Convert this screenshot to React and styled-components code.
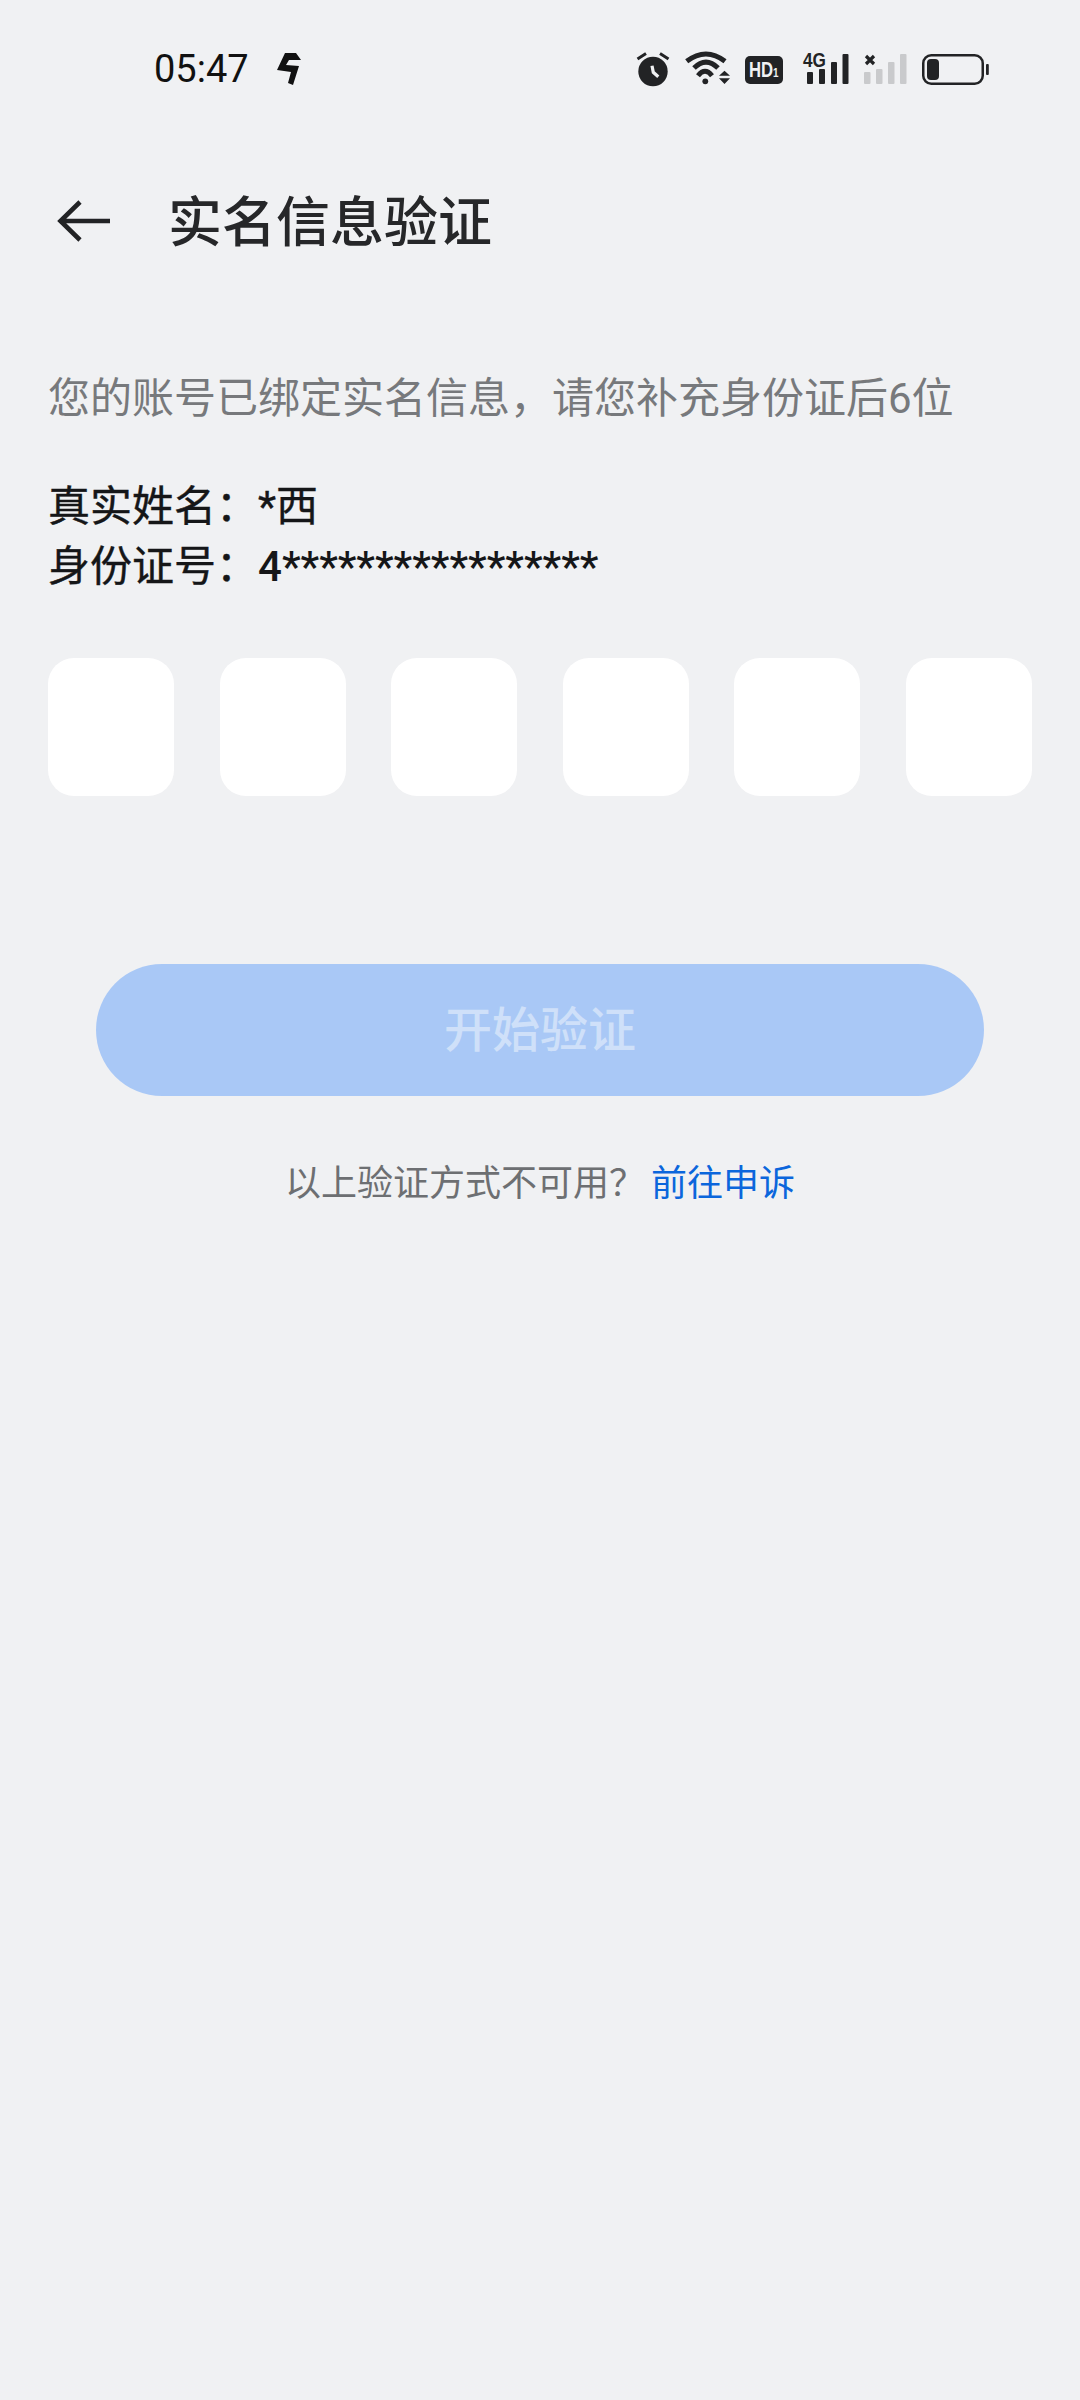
import React from "react";
import styled, { createGlobalStyle } from "styled-components";

const Global = createGlobalStyle`
  html, body { margin: 0; padding: 0; background: #f0f1f3; }
  * { box-sizing: border-box; }
`;
const CJK = `Roboto, "Noto Sans CJK SC", sans-serif`;
const INK = "#222325";
const GREY = "#c9cacc";
const Page = styled.div`
  width: 1080px; height: 2400px; background: #f0f1f3; font-family: ${CJK}; overflow: hidden;
`;
const StatusBar = styled.div`
  height: 138px; display: flex; align-items: center; justify-content: space-between;
  padding: 0 91px 0 154px;
`;
const TimeGroup = styled.div`display: flex; align-items: center; gap: 28px;`;
const Time = styled.span`font-size: 38px; color: #111;`;
const StatusIcons = styled.div`display: flex; align-items: center;`;
const Icon = styled.svg`display: block; flex: none; overflow: visible; margin-left: ${p => p.$gap || 0}px;`;
const Header = styled.div`
  height: 166px; display: flex; align-items: center; padding-left: 54px;
`;
const Title = styled.h1`
  margin: 5px 0 0 54px; font-size: 54px; font-weight: 500; color: #262729; line-height: 1;
`;
const Content = styled.div`padding: 0 48px;`;
const Hint = styled.p`
  margin: 0; padding-top: 65px; font-size: 42px; line-height: 60px; color: #77797c; white-space: nowrap;
`;
const Info = styled.div`
  margin-top: 48px; font-size: 42px; line-height: 60px; color: #151618; white-space: nowrap;
  -webkit-text-stroke: 0.4px #151618;
`;
const MaskedId = styled.span`font-weight: 500; -webkit-text-stroke: 0;`;
const Boxes = styled.div`
  margin-top: 61px; display: flex; justify-content: space-between;
`;
const Box = styled.div`width: 126px; height: 138px; background: #fff; border-radius: 26px;`;
const Button = styled.div`
  margin: 168px 48px 0; height: 132px; border-radius: 66px; background: #a9c8f6;
  display: flex; align-items: center; justify-content: center; padding-top: 2px;
  font-size: 48px; font-weight: 500; color: #cfe0f9; line-height: 1;
`;
const Footer = styled.div`
  margin-top: 61px; text-align: center; font-size: 36px; line-height: 54px; color: #6d6f72;
`;
const FooterLink = styled.span`color: #0b66dc; margin-left: 6px;`;

export default function App() {
  return (
    <Page>
      <Global />
      <StatusBar>
        <TimeGroup>
          <Time>05:47</Time>
          <svg width="24" height="32" viewBox="0 0 24 32">
            <path d="M8 0h11l5 7H12l-3 5 13 1-6 19-5-2 3-11L0 17z" fill="#111" />
          </svg>
        </TimeGroup>
        <StatusIcons>
          <Icon width="32" height="34" viewBox="0 0 32 34" fill="none">
            <circle cx="16" cy="19.5" r="14.7" fill={INK} />
            <path d="M15 13.7l1.3 6.6 5 4.4" stroke="#f0f1f3" strokeWidth="3.2" />
            <path d="M.5 7L9 1.5M31.5 7L23 1.5" stroke={INK} strokeWidth="3" />
          </Icon>
          <Icon $gap={16} width="45" height="34" viewBox="0 0 45 34" fill="none">
            <path d="M1.7 9.3Q21-5.3 40 9.3" stroke={INK} strokeWidth="5" />
            <path d="M9 16Q21 4 33 16" stroke={INK} strokeWidth="5" />
            <path d="M13 23.7Q20 15 27 23.7" stroke={INK} strokeWidth="5" />
            <circle cx="20.3" cy="29.3" r="2.9" fill={INK} />
            <path d="M34 23.7l5.5-5 5.5 5zM34 26.3h11L39.5 32z" fill={INK} />
          </Icon>
          <Icon $gap={15} width="38" height="34" viewBox="0 0 38 34">
            <rect y="4" width="38" height="28" rx="5" fill={INK} />
            <text transform="translate(4 25) scale(.76 1)" fontSize="22" fontWeight="700" fill="#f0f1f3" fontFamily="Liberation Sans">HD<tspan fontSize="13">1</tspan></text>
          </Icon>
          <Icon $gap={20} width="46" height="34" viewBox="0 0 46 34">
            <text transform="translate(0 15) scale(.86 1)" fontSize="20" fontWeight="700" fill={INK} fontFamily="Liberation Sans">4G</text>
            <rect x="4" y="20" width="6" height="12" rx="1" fill={INK} />
            <rect x="16" y="17" width="6" height="15" rx="1" fill={INK} />
            <rect x="28" y="10" width="6" height="22" rx="1" fill={INK} />
            <rect x="39.5" y="2" width="6" height="30" rx="1" fill={INK} />
          </Icon>
          <Icon $gap={15} width="43" height="34" viewBox="0 0 43 34">
            <path d="M2 4l8 8M10 4l-8 8" stroke={INK} strokeWidth="3.2" />
            <rect x="0" y="20" width="6.5" height="12" rx="1" fill={GREY} />
            <rect x="12" y="17" width="6.5" height="15" rx="1" fill={GREY} />
            <rect x="24" y="10" width="6.5" height="22" rx="1" fill={GREY} />
            <rect x="36" y="2" width="6.5" height="30" rx="1" fill={GREY} />
          </Icon>
          <Icon $gap={15} width="67" height="34" viewBox="0 0 67 34" fill="none">
            <rect x="1.25" y="3.25" width="59.5" height="28.5" rx="8" stroke={INK} strokeWidth="2.5" />
            <rect x="5" y="7" width="12" height="21" rx="4" fill={INK} />
            <rect x="64" y="12" width="2.8" height="11" rx="1" fill={INK} />
          </Icon>
        </StatusIcons>
      </StatusBar>
      <Header>
        <svg width="60" height="44" viewBox="0 0 60 44" fill="none" stroke={INK} strokeWidth="4.6">
          <path d="M26 3L6.5 22 26 41M6.5 22H56" />
        </svg>
        <Title>实名信息验证</Title>
      </Header>
      <Content>
        <Hint>您的账号已绑定实名信息，请您补充身份证后6位</Hint>
        <Info>
          <div>真实姓名：*西</div>
          <div>身份证号：<MaskedId>4*****************</MaskedId></div>
        </Info>
        <Boxes>
          {[0, 1, 2, 3, 4, 5].map(i => <Box key={i} />)}
        </Boxes>
        <Button>开始验证</Button>
        <Footer>以上验证方式不可用？<FooterLink>前往申诉</FooterLink></Footer>
      </Content>
    </Page>
  );
}
